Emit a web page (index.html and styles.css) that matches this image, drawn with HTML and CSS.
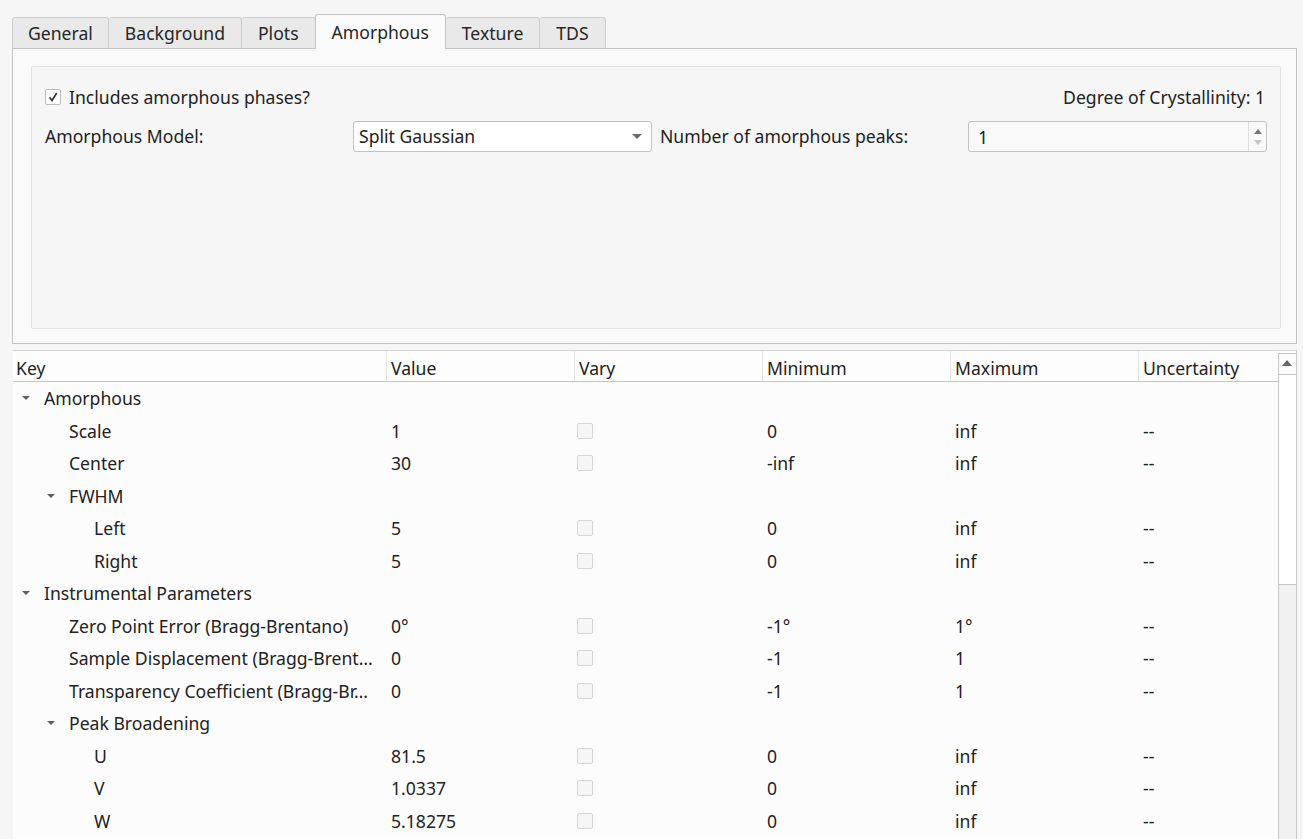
FILE: index.html
```html
<!DOCTYPE html>
<html lang="en">
<head>
  <meta charset="UTF-8">
  <title>Refinement settings</title>
  <link rel="stylesheet" href="styles.css">
</head>
<body>

<div class="window">
  <!-- Onglets -->
  <div class="tab-bar">
    <div class="tab">General</div>
    <div class="tab">Background</div>
    <div class="tab">Plots</div>
    <div class="tab active">Amorphous</div>
    <div class="tab">Texture</div>
    <div class="tab">TDS</div>
  </div>

  <div class="tab-pane">
    <div class="group-box">
      <div class="top-row">
        <label class="check-label">
          <span class="checkbox checked">
            <svg width="12" height="12" viewBox="0 0 12 12"><path d="M2.5 6.2 L5 9.5 L9.8 2" fill="none" stroke="#333" stroke-width="1.6"/></svg>
          </span>
          Includes amorphous phases?
        </label>
        <span class="crystallinity">Degree of Crystallinity: 1</span>
      </div>
      <div class="form-grid">
        <span class="form-label">Amorphous Model:</span>
        <div class="combo">
          <span>Split Gaussian</span>
          <span class="combo-arrow"></span>
        </div>
        <span class="form-label">Number of amorphous peaks:</span>
        <div class="spin">
          <span>1</span>
          <span class="spin-buttons">
            <span class="spin-up"></span>
            <span class="spin-down"></span>
          </span>
        </div>
      </div>
    </div>
  </div>

  <!-- Arbre des paramètres -->
  <div class="tree-frame">
    <div class="tree">
      <div class="tree-header">
        <div class="col col-key">Key</div>
        <div class="col">Value</div>
        <div class="col">Vary</div>
        <div class="col">Minimum</div>
        <div class="col">Maximum</div>
        <div class="col col-last">Uncertainty</div>
      </div>
      <div id="treeBody"></div>
    </div>
    <div class="scrollbar">
      <div class="scroll-up"></div>
      <div class="scroll-thumb"></div>
      <div class="scroll-track"></div>
    </div>
  </div>
</div>

<script>
  // Lignes de l'arbre : [niveau, clé, valeur, min, max] (valeur null = groupe)
  const rows = [
    [0, 'Amorphous', null],
    [1, 'Scale', '1', '0', 'inf'],
    [1, 'Center', '30', '-inf', 'inf'],
    [1, 'FWHM', null],
    [2, 'Left', '5', '0', 'inf'],
    [2, 'Right', '5', '0', 'inf'],
    [0, 'Instrumental Parameters', null],
    [1, 'Zero Point Error (Bragg-Brentano)', '0°', '-1°', '1°'],
    [1, 'Sample Displacement (Bragg-Brent\u2026', '0', '-1', '1'],
    [1, 'Transparency Coefficient (Bragg-Br\u2026', '0', '-1', '1'],
    [1, 'Peak Broadening', null],
    [2, 'U', '81.5', '0', 'inf'],
    [2, 'V', '1.0337', '0', 'inf'],
    [2, 'W', '5.18275', '0', 'inf']
  ];

  const body = document.getElementById('treeBody');
  rows.forEach(([level, key, value, min, max]) => {
    const row = document.createElement('div');
    row.className = 'tree-row';
    const indent = 6 + level * 25;
    if (value === null) {
      row.innerHTML = `
        <div class="cell cell-key" style="padding-left:${indent}px"><span class="branch"></span>${key}</div>`;
    } else {
      row.innerHTML = `
        <div class="cell cell-key" style="padding-left:${indent}px"><span class="branch empty"></span>${key}</div>
        <div class="cell">${value}</div>
        <div class="cell"><span class="vary-box"></span></div>
        <div class="cell">${min}</div>
        <div class="cell">${max}</div>
        <div class="cell cell-last">--</div>`;
    }
    body.appendChild(row);
  });
</script>

</body>
</html>
```

FILE: styles.css
```css
/* Fenêtre */
body {
  margin: 0;
  background: #f6f6f6;
  font-family: "Noto Sans", sans-serif;
  font-size: 17.6px;
  color: #222;
  overflow: hidden;
}
.window {
  width: 1303px;
  height: 839px;
  padding: 14px 6px 0 12px;
  box-sizing: border-box;
}
/* Onglets */
.tab-bar {
  display: flex;
  height: 34px;
  align-items: flex-end;
}
.tab {
  height: 31px;
  box-sizing: border-box;
  padding: 0 16px;
  display: flex;
  align-items: center;
  background: #e9e9e9;
  border: 1px solid #cdcdcd;
  border-bottom: none;
  border-left: none;
  border-radius: 3px 3px 0 0;
  color: #262626;
}
.tab:first-child {
  border-left: 1px solid #cdcdcd;
  padding: 0 15px;
}
.tab.active {
  background: #fafafa;
  border-left: 1px solid #c4c4c4;
  border-right: 1px solid #c4c4c4;
  border-top: 1px solid #c4c4c4;
  margin-left: -1px;
  margin-bottom: -1px;
  height: 35px;
  padding: 0 16px;
  position: relative;
}
.tab-pane {
  height: 296px;
  box-sizing: border-box;
  border: 1px solid #c4c4c4;
  background: #fafafa;
  padding: 17px 15px 14px 18px;
}
.group-box {
  height: 100%;
  box-sizing: border-box;
  border: 1px solid #e2e2e2;
  border-radius: 2px;
  background: #f6f6f6;
  padding: 18px 14px 0 13px;
}
.top-row {
  display: flex;
  justify-content: space-between;
  align-items: center;
  height: 24px;
}
.check-label {
  display: flex;
  align-items: center;
  gap: 8px;
}
.checkbox {
  width: 16px;
  height: 16px;
  box-sizing: border-box;
  border: 1px solid #bdbdbd;
  border-radius: 2px;
  background: #fcfcfc;
  display: flex;
  align-items: center;
  justify-content: center;
}
.crystallinity {
  padding-right: 1px;
}
.form-grid {
  display: grid;
  grid-template-columns: 300px 299px 300px 299px;
  column-gap: 8px;
  margin-top: 11px;
  align-items: center;
}
.combo, .spin {
  height: 31px;
  box-sizing: border-box;
  border: 1px solid #c2c2c2;
  border-radius: 3px;
  display: flex;
  align-items: center;
  justify-content: space-between;
  padding: 0 0 0 5px;
}
.combo {
  background: #fff;
  padding-right: 9px;
}
.combo-arrow {
  width: 0;
  height: 0;
  border-left: 5px solid transparent;
  border-right: 5px solid transparent;
  border-top: 5px solid #6a6a6a;
}
.spin {
  background: #f9f9f9;
  padding-left: 9px;
  margin-top: 1px;
}
.spin-buttons {
  width: 17px;
  height: 100%;
  border-left: 1px solid #dedede;
  display: flex;
  flex-direction: column;
  align-items: center;
  justify-content: center;
  gap: 6px;
}
.spin-up {
  border-left: 4px solid transparent;
  border-right: 4px solid transparent;
  border-bottom: 5px solid #777;
}
.spin-down {
  border-left: 4px solid transparent;
  border-right: 4px solid transparent;
  border-top: 5px solid #c4c4c4;
}
/* Arbre */
.tree-frame {
  margin-top: 6px;
  margin-left: 1px;
  height: 500px;
  border-top: 1px solid #d4d4d4;
  border-right: 1px solid #c8c8c8;
  display: flex;
  background: #fcfcfc;
}
.tree {
  flex: 1;
  min-width: 0;
  overflow: hidden;
}
.tree-header {
  display: flex;
  height: 31px;
  border-bottom: 1px solid #c6c6c6;
  background: #fdfdfd;
  box-sizing: border-box;
}
.col, .cell {
  width: 188px;
  flex-shrink: 0;
  box-sizing: border-box;
  padding-left: 4px;
  white-space: nowrap;
  overflow: hidden;
}
.col {
  display: flex;
  align-items: flex-end;
  padding-bottom: 1px;
  border-right: 1px solid #e4e4e4;
}
.col-key {
  width: 374px;
  padding-left: 3px;
}
.cell-key {
  width: 374px;
}
.col-last, .cell-last {
  flex: 1;
  border-right: none;
}
.tree-row {
  display: flex;
  height: 32.5px;
  align-items: center;
}
.cell-key {
  display: flex;
  align-items: center;
}
.branch {
  width: 25px;
  height: 4px;
  flex-shrink: 0;
  position: relative;
}
.branch::before {
  content: "";
  position: absolute;
  left: 3px;
  top: 0;
  border-left: 4px solid transparent;
  border-right: 4px solid transparent;
  border-top: 4px solid #5e5e5e;
}
.branch.empty::before {
  display: none;
}
.vary-box {
  display: block;
  width: 16px;
  height: 16px;
  margin-left: -2px;
  box-sizing: border-box;
  border: 1px solid #d6d6d6;
  border-radius: 2px;
  background: #f6f6f6;
}
/* Barre de défilement */
.scrollbar {
  width: 17px;
  flex-shrink: 0;
  display: flex;
  flex-direction: column;
  border-left: 1px solid #c6c6c6;
  margin-top: 2px;
}
.scroll-up {
  height: 20px;
  background: #fcfcfc;
  border-top: 1px solid #c6c6c6;
  position: relative;
}
.scroll-up::before {
  content: "";
  position: absolute;
  left: 3px;
  top: 6px;
  border-left: 5px solid transparent;
  border-right: 5px solid transparent;
  border-bottom: 6px solid #666;
}
.scroll-thumb {
  height: 209px;
  background: #fff;
  border-top: 1px solid #c6c6c6;
  border-bottom: 1px solid #c6c6c6;
}
.scroll-track {
  flex: 1;
  background: #f1f1f1;
}
```
